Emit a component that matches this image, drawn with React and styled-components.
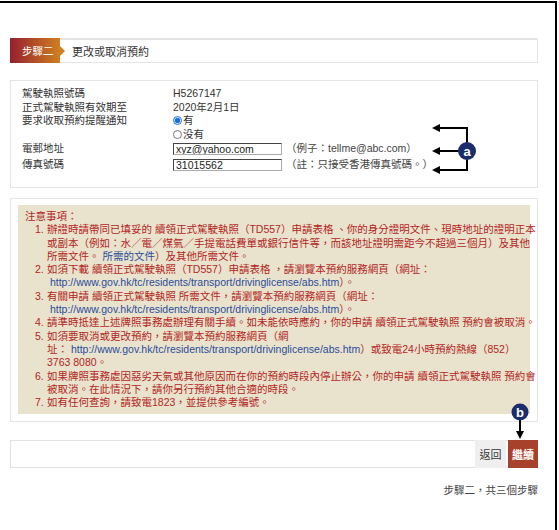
import React from 'react'
import styled, { createGlobalStyle } from 'styled-components'

const GlobalStyle = createGlobalStyle`
  body {
    margin: 0;
    background: #fff;
    font-family: "Liberation Sans", "Noto Sans CJK TC", sans-serif;
  }
`

const Frame = styled.div`
  position: relative;
  box-sizing: border-box;
  width: 557px;
  min-height: 529px;
  margin-top: 1px;
  border-top: 2px solid #000;
  border-right: 2px solid #000;
  padding: 35px 17px 0 10px;
`

const StepBar = styled.div`
  display: flex;
  align-items: center;
  height: 25px;
  box-sizing: border-box;
  border: 1px solid #e4e4e4;
  border-top-width: 2px;
  background: #fff;
`

const StepBadge = styled.div`
  position: relative;
  display: flex;
  align-items: center;
  align-self: stretch;
  width: 50px;
  margin: -2px 0 -1px -1px;
  padding-left: 12px;
  box-sizing: border-box;
  background: linear-gradient(to right, #95202f, #cf7f1f);
  color: #fff;
  font-size: 10.5px;

  &::after {
    content: "";
    position: absolute;
    right: -5px;
    top: 50%;
    margin-top: -5px;
    border-left: 5px solid #cf7f1f;
    border-top: 5px solid transparent;
    border-bottom: 5px solid transparent;
  }
`

const StepTitle = styled.div`
  margin-left: 12px;
  font-size: 11px;
  color: #333;
`

const InfoBox = styled.div`
  margin-top: 17px;
  border: 1px solid #e4e4e4;
  padding: 6px 12px 14px 11px;
  font-size: 10.5px;
  color: #333;
`

const InfoRow = styled.div`
  display: grid;
  grid-template-columns: 151px 1fr;
  align-items: center;
  min-height: ${p => (p.$field ? '16px' : '13.5px')};
  line-height: 13.5px;
`

const RadioGroup = styled.div`
  display: flex;
  flex-direction: column;
`

const RadioOption = styled.label`
  display: flex;
  align-items: center;
  height: 13.5px;

  input {
    width: 9px;
    height: 9px;
    margin: 0 1px 0 0;
    accent-color: #1a6fd8;
  }
`

const FieldLine = styled.div`
  display: flex;
  align-items: center;
  gap: 4px;
`

const TextInput = styled.input`
  box-sizing: border-box;
  width: 109px;
  height: 12px;
  padding: 0 2px;
  border: 1px solid #444;
  border-right-color: #aaa;
  border-bottom-color: #aaa;
  font-family: "Liberation Sans", sans-serif;
  font-size: 10.5px;
  color: #222;
  outline: none;
`

const Hint = styled.span`
  color: #444;
`

const NoticeBox = styled.div`
  margin-top: 10px;
  border: 1px solid #e4e4e4;
  padding: 6px 7px 7px 7px;
`

const Notice = styled.div`
  background: #e9e3cd;
  padding: 5px 8px 5px 7px;
  color: #b3261e;
  font-size: 10.5px;
  line-height: 13.3px;
  white-space: nowrap;
`

const NoticeItem = styled.div`
  display: grid;
  grid-template-columns: 12px 1fr;
  padding-left: 10px;
`

const Num = styled.span``

const Link = styled.span`
  color: #2b4c9b;
`

const ActionBar = styled.div`
  display: flex;
  justify-content: flex-end;
  height: 28px;
  margin-top: 18px;
  box-sizing: border-box;
  border: 1px solid #e2e2e2;
`

const Button = styled.button`
  width: ${p => (p.$primary ? '30px' : '31px')};
  margin: -1px ${p => (p.$primary ? '-1px' : '2px')} -1px 0;
  border: none;
  padding: 0;
  background: ${p => (p.$primary ? '#a8412b' : '#efefef')};
  color: ${p => (p.$primary ? '#fff' : '#333')};
  font-family: "Noto Sans CJK TC", sans-serif;
  font-size: 11px;
  font-weight: ${p => (p.$primary ? 700 : 400)};
`

const StepCount = styled.div`
  margin-top: 14px;
  text-align: right;
  font-size: 10.5px;
  color: #444;
`

const Overlay = styled.svg`
  position: absolute;
  top: -3px;
  left: 0;
  pointer-events: none;
`

function Callouts() {
  const navy = '#1c2d6b'
  return (
    <Overlay width="559" height="530" viewBox="0 0 559 530">
      <g stroke="#000" strokeWidth="2" fill="none">
        <line x1="467" y1="127" x2="467" y2="171" />
        <line x1="467" y1="128" x2="439" y2="128" />
        <line x1="467" y1="151" x2="439" y2="151" />
        <line x1="467" y1="170" x2="439" y2="170" />
        <line x1="520" y1="418" x2="520" y2="432" />
      </g>
      <g fill="#000">
        <polygon points="432,128 440,124 440,132" />
        <polygon points="432,151 440,147 440,155" />
        <polygon points="432,170 440,166 440,174" />
        <polygon points="520,439 516,431 524,431" />
      </g>
      <circle cx="467" cy="151" r="9" fill={navy} />
      <text x="467" y="155.5" textAnchor="middle" fill="#fff" fontSize="13" fontWeight="700" fontFamily="Liberation Sans, sans-serif">a</text>
      <circle cx="520" cy="412" r="8.5" fill={navy} />
      <text x="520" y="416.5" textAnchor="middle" fill="#fff" fontSize="13" fontWeight="700" fontFamily="Liberation Sans, sans-serif">b</text>
    </Overlay>
  )
}

const URL = 'http://www.gov.hk/tc/residents/transport/drivinglicense/abs.htm'

export default function App() {
  return (
    <>
      <GlobalStyle />
      <Frame>
        <StepBar>
          <StepBadge>步驟二</StepBadge>
          <StepTitle>更改或取消預約</StepTitle>
        </StepBar>

        <InfoBox>
          <InfoRow><span>駕駛執照號碼</span><span>H5267147</span></InfoRow>
          <InfoRow><span>正式駕駛執照有效期至</span><span>2020年2月1日</span></InfoRow>
          <InfoRow>
            <span style={{ alignSelf: 'start' }}>要求收取預約提醒通知</span>
            <RadioGroup>
              <RadioOption><input type="radio" name="remind" defaultChecked />有</RadioOption>
              <RadioOption><input type="radio" name="remind" />没有</RadioOption>
            </RadioGroup>
          </InfoRow>
          <InfoRow $field>
            <span>電郵地址</span>
            <FieldLine>
              <TextInput defaultValue="xyz@yahoo.com" />
              <Hint>（例子：tellme@abc.com）</Hint>
            </FieldLine>
          </InfoRow>
          <InfoRow $field>
            <span>傳真號碼</span>
            <FieldLine>
              <TextInput defaultValue="31015562" />
              <Hint>（註：只接受香港傳真號碼。）</Hint>
            </FieldLine>
          </InfoRow>
        </InfoBox>

        <NoticeBox>
          <Notice>
            <div>注意事項：</div>
            <NoticeItem>
              <Num>1.</Num>
              <span>
                辦證時請帶同已填妥的 續領正式駕駛執照（TD557）申請表格 、你的身分證明文件、現時地址的證明正本<br />
                或副本（例如：水／電／煤氣／手提電話費單或銀行信件等，而該地址證明需距今不超過三個月）及其他<br />
                所需文件。 <Link>所需的文件</Link>）及其他所需文件。
              </span>
            </NoticeItem>
            <NoticeItem>
              <Num>2.</Num>
              <span>
                如須下載 續領正式駕駛執照（TD557）申請表格 ，請瀏覽本預約服務網頁（網址：<br />
                &nbsp;<Link>{URL}</Link>）。
              </span>
            </NoticeItem>
            <NoticeItem>
              <Num>3.</Num>
              <span>
                有關申請 續領正式駕駛執照 所需文件，請瀏覽本預約服務網頁（網址：<br />
                &nbsp;<Link>{URL}</Link>）。
              </span>
            </NoticeItem>
            <NoticeItem>
              <Num>4.</Num>
              <span>請準時抵達上述牌照事務處辦理有關手續。如未能依時應約，你的申請 續領正式駕駛執照 預約會被取消。</span>
            </NoticeItem>
            <NoticeItem>
              <Num>5.</Num>
              <span>
                如須要取消或更改預約，請瀏覽本預約服務網頁（網<br />
                址： <Link>{URL}</Link>）或致電24小時預約熱線（852）<br />
                3763 8080。
              </span>
            </NoticeItem>
            <NoticeItem>
              <Num>6.</Num>
              <span>
                如果牌照事務處因惡劣天氣或其他原因而在你的預約時段內停止辦公，你的申請 續領正式駕駛執照 預約會<br />
                被取消。在此情況下，請你另行預約其他合適的時段。
              </span>
            </NoticeItem>
            <NoticeItem>
              <Num>7.</Num>
              <span>如有任何查詢，請致電1823，並提供參考編號。</span>
            </NoticeItem>
          </Notice>
        </NoticeBox>

        <ActionBar>
          <Button>返回</Button>
          <Button $primary>繼續</Button>
        </ActionBar>

        <StepCount>步驟二，共三個步驟</StepCount>

        <Callouts />
      </Frame>
    </>
  )
}
